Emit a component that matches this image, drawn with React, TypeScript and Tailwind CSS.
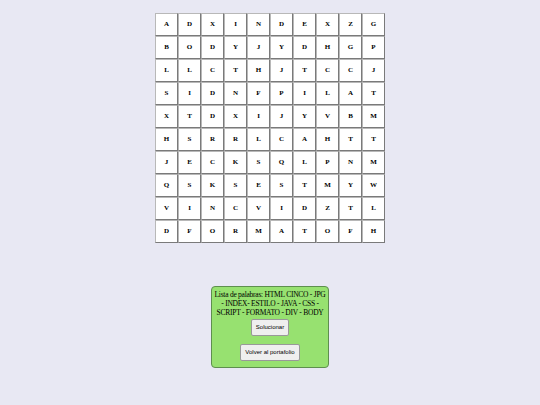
const ROWS = [
  "ADXINDEXZG",
  "BODYJYDHGP",
  "LLCTHJTCCJ",
  "SIDNFPILAT",
  "XTDXIJYVBM",
  "HSRRLCAHTT",
  "JECKSQLPNM",
  "QSKSESTMYW",
  "VINCVIDZTL",
  "DFORMATOFH",
];

const WORD_LINES = [
  "Lista de palabras: HTML CINCO - JPG",
  "- INDEX- ESTILO - JAVA - CSS -",
  "SCRIPT - FORMATO - DIV - BODY",
];

export default function App() {
  return (
    <div className="w-[540px] h-[405px] bg-[#e8e8f3] flex flex-col items-center pt-[13px] font-['Liberation_Serif',serif]">
      <div className="grid grid-cols-10">
        {ROWS.map((row, r) =>
          row.split("").map((ch, c) => (
            <div
              key={`${r}-${c}`}
              className="w-[23px] h-[23px] bg-white border border-t-[#b8b8b8] border-l-[#b8b8b8] border-r-[#7a7a7a] border-b-[#7a7a7a] flex items-center justify-center text-[7px] font-bold text-black"
            >
              {ch}
            </div>
          ))
        )}
      </div>

      <div className="mt-[43px] w-[118px] h-[82px] bg-[#97e170] border border-[#5e8f4e] rounded-[4px] flex flex-col items-center pt-[3px]">
        <div className="flex flex-col items-center text-[7.5px] leading-[9px] text-black tracking-[-0.25px]">
          {WORD_LINES.map((l) => (
            <span key={l} className="whitespace-nowrap">{l}</span>
          ))}
        </div>
        <button
          type="button"
          className="mt-[2px] h-[17px] px-[4px] bg-[#efefef] border border-[#999] rounded-[2px] text-[6px] text-black font-['Liberation_Sans',sans-serif]"
        >
          Solucionar
        </button>
        <button
          type="button"
          className="mt-[8px] h-[17px] px-[4px] bg-[#efefef] border border-[#999] rounded-[2px] text-[6px] text-black font-['Liberation_Sans',sans-serif]"
        >
          Volver al portafolio
        </button>
      </div>
    </div>
  );
}
